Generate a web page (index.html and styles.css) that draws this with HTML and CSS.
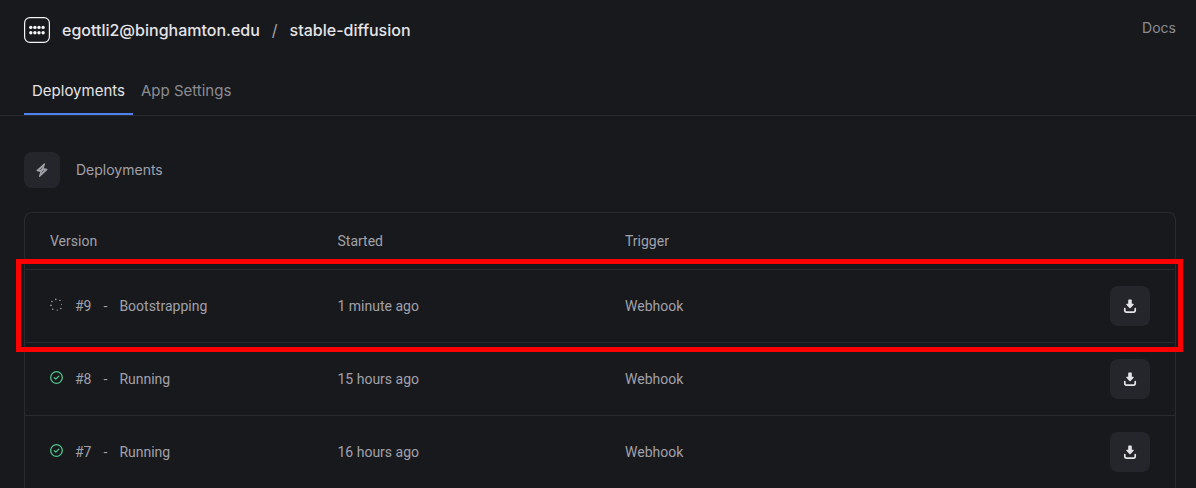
FILE: index.html
```html
<!DOCTYPE html>
<html lang="en">
<head>
<meta charset="utf-8">
<title>stable-diffusion – Deployments</title>
<link rel="stylesheet" href="styles.css">
</head>
<body>
<svg class="sprite" aria-hidden="true">
  <symbol id="download" viewBox="0 0 14 14">
    <path d="M5.2 1.2q0-.8.7-.8h2.2q.7 0 .7.8v3.6h1.4q1 0 .4.9L7.6 8.9q-.6.6-1.2 0L3.4 5.7q-.6-.9.4-.9h1.4z" fill="currentColor"/>
    <path d="M1.8 9.5v2q0 1.6 1.7 1.6h7q1.7 0 1.7-1.6v-2" fill="none" stroke="currentColor" stroke-width="1.7" stroke-linecap="round"/>
  </symbol>
  <symbol id="check" viewBox="0 0 13 13">
    <circle cx="6.5" cy="6.5" r="5.8" fill="none" stroke="currentColor" stroke-width="1.3"/>
    <path d="M4.3 6.8l1.5 1.3 2.9-2.8" fill="none" stroke="currentColor" stroke-width="1.3" stroke-linecap="round" stroke-linejoin="round"/>
  </symbol>
  <symbol id="spinner" viewBox="0 0 13 13">
    <g fill="currentColor">
      <circle cx="5.8" cy="1.4" r=".8"/><circle cx="9.9" cy="2.4" r=".7"/><circle cx="11.5" cy="6.5" r=".5"/><circle cx="10.8" cy="10.5" r=".8"/><circle cx="7.2" cy="12.1" r=".7"/><circle cx="2.8" cy="11.3" r=".8"/><circle cx="1" cy="7.4" r=".8"/><circle cx="2" cy="3.5" r=".8"/>
    </g>
  </symbol>
</svg>
<header class="topbar">
  <nav class="crumbs" aria-label="Breadcrumb">
    <a class="logo" href="#" aria-label="Home">
      <svg viewBox="0 0 26 26" width="26" height="26">
        <rect x=".6" y=".6" width="24.8" height="24.8" rx="5.4" fill="none" stroke="currentColor" stroke-width="1.2"/>
        <g fill="currentColor">
          <circle cx="6.8" cy="10.4" r="1.7"/><circle cx="10.9" cy="10.4" r="1.7"/><circle cx="15" cy="10.4" r="1.7"/><circle cx="19.1" cy="10.4" r="1.7"/>
          <circle cx="6.8" cy="15.8" r="1.7"/><circle cx="10.9" cy="15.8" r="1.7"/><circle cx="15" cy="15.8" r="1.7"/><circle cx="19.1" cy="15.8" r="1.7"/>
        </g>
      </svg>
    </a>
    <a class="crumb" href="#">egottli2@binghamton.edu</a>
    <span class="slash">/</span>
    <a class="crumb" href="#">stable-diffusion</a>
  </nav>
  <a class="docs" href="#">Docs</a>
</header>
<nav class="tabs" aria-label="App">
  <a class="tab tab-active" href="#" aria-current="page">Deployments</a>
  <a class="tab" href="#">App Settings</a>
</nav>
<main class="content">
  <div class="section-head">
    <span class="section-icon">
      <svg viewBox="0 0 14 14" width="14" height="14">
        <path d="M9.4.9L2.2 7.6l3.9.8-1.5 4.9 7.2-6.8-3.9-.8z" fill="currentColor" stroke="currentColor" stroke-width="1.3" stroke-linejoin="round"/>
        <path d="M5.4 6.6l1.8-1.6M8.6 7.6L6.8 9.2" stroke="#25262b" stroke-width=".6" stroke-linecap="round"/>
      </svg>
    </span>
    <h1 class="section-title">Deployments</h1>
  </div>
  <table class="deployments">
    <thead>
      <tr><th>Version</th><th>Started</th><th>Trigger</th><th aria-label="Logs"></th></tr>
    </thead>
    <tbody>
      <tr class="highlighted">
        <td><div class="version"><svg class="status pending"><use href="#spinner"/></svg><span>#9</span><span>-</span><span>Bootstrapping</span></div></td>
        <td>1 minute ago</td><td>Webhook</td>
        <td><button class="download" aria-label="Download #9"><svg class="download-icon"><use href="#download"/></svg></button></td>
      </tr>
      <tr>
        <td><div class="version"><svg class="status running"><use href="#check"/></svg><span>#8</span><span>-</span><span>Running</span></div></td>
        <td>15 hours ago</td><td>Webhook</td>
        <td><button class="download" aria-label="Download #8"><svg class="download-icon"><use href="#download"/></svg></button></td>
      </tr>
      <tr>
        <td><div class="version"><svg class="status running"><use href="#check"/></svg><span>#7</span><span>-</span><span>Running</span></div></td>
        <td>16 hours ago</td><td>Webhook</td>
        <td><button class="download" aria-label="Download #7"><svg class="download-icon"><use href="#download"/></svg></button></td>
      </tr>
    </tbody>
  </table>
</main>
</body>
</html>
```
FILE: styles.css
```css
* {
  box-sizing: border-box;
}

body {
  margin: 0;
  background: #18191d;
  color: #a1a1aa;
  font-family: Inter, sans-serif;
  font-size: 14px;
  line-height: 20px;
}

a {
  color: inherit;
  text-decoration: none;
}

svg {
  display: block;
}

.sprite {
  display: none;
}

.topbar {
  display: flex;
  justify-content: space-between;
  align-items: flex-start;
  padding: 17px 20px 0 24px;
}

.crumbs {
  display: flex;
  align-items: center;
  gap: 12px;
  font-size: 16px;
  font-weight: 500;
  line-height: 26px;
}

.logo {
  color: #f4f4f5;
}

.crumb {
  color: #e4e4e7;
}

.slash {
  font-weight: 400;
}

.docs {
  padding-top: 1px;
  color: #8b8c92;
}

.tabs {
  display: flex;
  margin-top: 24px;
  padding: 0 24px;
  border-bottom: 1px solid #2a2b30;
  font-size: 15px;
}

.tab {
  padding: 14px 8px 12px;
  border-bottom: 2px solid transparent;
  color: #8b8c92;
}

.tab-active {
  border-bottom-color: #5081f0;
  color: #e4e4e7;
}

.content {
  padding: 36px 20px 0 24px;
}

.section-head {
  display: flex;
  align-items: center;
  gap: 16px;
  margin-bottom: 24px;
}

.section-icon {
  display: grid;
  place-items: center;
  width: 36px;
  height: 36px;
  border-radius: 8px;
  background: #25262b;
}

.section-title {
  margin: 0;
  font-size: 14px;
  font-weight: 400;
}

.deployments {
  width: 100%;
  table-layout: fixed;
  border: 1px solid #2a2b30;
  border-bottom: 0;
  border-radius: 8px 8px 0 0;
  border-spacing: 0;
  font-family: Roboto, sans-serif;
}

th {
  padding: 18px 25px;
  font-weight: 400;
  text-align: left;
}

td {
  padding: 16px 25px;
  border-top: 1px solid #2a2b30;
}

.version {
  display: flex;
  align-items: center;
  gap: 12px;
}

.status {
  width: 13px;
  height: 13px;
  margin-bottom: 3px;
}

.running {
  color: #4fc38a;
}

.pending {
  color: #a1a1aa;
}

.download {
  display: grid;
  place-items: center;
  width: 40px;
  height: 40px;
  margin-left: auto;
  padding: 0;
  border: 0;
  border-radius: 8px;
  background: #25262b;
  color: #e4e4e7;
}

.download-icon {
  width: 14px;
  height: 14px;
}

.highlighted {
  position: relative;
}

/* Frame around the whole row, anchored to the <tr> */
.highlighted td:first-child::after {
  content: "";
  position: absolute;
  inset: -10px -8px -10px -9px;
  border: 5px solid #f00;
  pointer-events: none;
}
```
